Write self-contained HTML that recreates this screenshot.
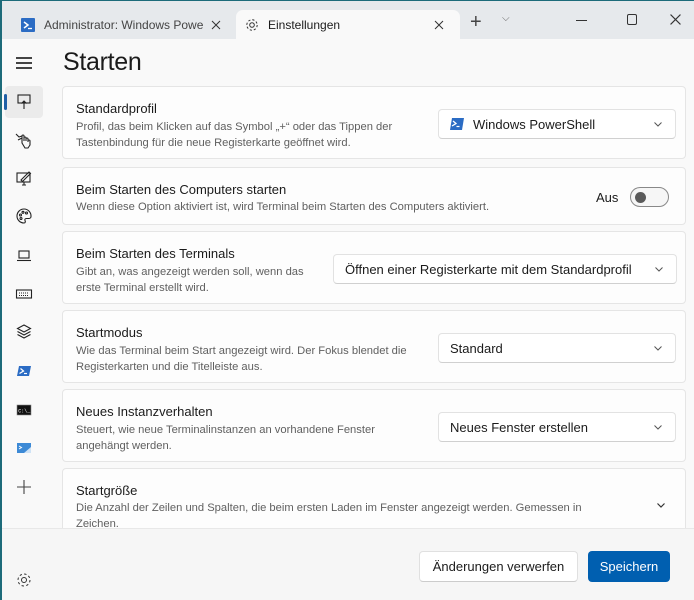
<!DOCTYPE html>
<html><head><meta charset="utf-8"><style>
*{box-sizing:border-box;margin:0;padding:0}
body{width:694px;height:600px;overflow:hidden;font-family:"Liberation Sans",sans-serif;background:#f3f3f3;position:relative;color:#1b1b1b}
.frame{position:absolute;left:0;top:0;width:694px;height:600px;border-left:2px solid #1d6b7a;border-top:1px solid #1d6b7a}
.titlebar{position:absolute;left:2px;top:1px;right:0;height:38px;background:#e6e9ec}
.tab1{position:absolute;left:13px;top:10px;width:220px;height:28px;font-size:12px;color:#444;display:flex;align-items:center}
.tab2{position:absolute;left:234px;top:9px;width:224px;height:30px;background:#f9f9f9;border-radius:7px 7px 0 0;font-size:12px;display:flex;align-items:center}
.content{position:absolute;left:2px;top:39px;right:0;bottom:0;background:#f9f9f9}
.ic{position:absolute;left:14px;width:20px;height:20px}
h1{position:absolute;left:63px;top:48px;font-size:25px;font-weight:normal;letter-spacing:-0.3px;color:#1b1b1b}
.card{position:absolute;left:62px;width:624px;background:#fdfdfd;border:1px solid #e5e5e5;border-radius:4px}
.t{position:absolute;left:13px;font-size:13px;color:#1b1b1b;white-space:nowrap}
.d{position:absolute;left:13px;font-size:11.2px;line-height:16px;color:#606060;white-space:nowrap}
.dd{position:absolute;height:30px;background:#fff;border:1px solid #e2e2e2;border-bottom-color:#d0d0d0;border-radius:4px;font-size:13px;display:flex;align-items:center;padding-left:11px}
.chev{position:absolute;right:12px;top:10px;width:10px;height:8px}
.btn{position:absolute;top:551px;height:31px;border-radius:4px;font-size:13px;display:flex;align-items:center;justify-content:center}
.x{position:absolute;width:10px;height:10px}
</style></head><body>
<div class="titlebar">
 <div class="tab1"><svg width="14" height="14" viewBox="0 0 14 14" style="margin:0 9px 0 6px"><rect width="14" height="14" rx="1" fill="#2b6cc4"/><path d="M3 4l4 3-4 3" stroke="#fff" stroke-width="1.5" fill="none"/><path d="M7 10.5h4" stroke="#fff" stroke-width="1.3"/></svg>Administrator: Windows Powe<svg class="x" style="left:196px;top:9px" viewBox="0 0 10 10"><path d="M1 1l8 8M9 1l-8 8" stroke="#333" stroke-width="1"/></svg></div>
 <div class="tab2"><svg width="16" height="16" viewBox="0 0 16 16" style="margin:0 8px 0 8px"><circle cx="8" cy="8" r="2.3" fill="none" stroke="#333" stroke-width="1"/><circle cx="8" cy="8" r="5.2" fill="none" stroke="#333" stroke-width="1" stroke-dasharray="2.2 1.9"/></svg>Einstellungen<svg class="x" style="left:198px;top:10px" viewBox="0 0 10 10"><path d="M1 1l8 8M9 1l-8 8" stroke="#333" stroke-width="1"/></svg></div>
 <div style="position:absolute;left:468px;top:10px;font-size:20px;color:#444;font-weight:300">+</div>
 <div style="position:absolute;left:500px;top:12px;font-size:10px;color:#666">⌵</div>
 <div style="position:absolute;left:574px;top:19px;width:11px;height:1px;background:#333"></div>
 <div style="position:absolute;left:625px;top:13px;width:10px;height:11px;border:1px solid #333;border-radius:2px"></div>
 <svg class="x" style="left:668px;top:13px;width:11px;height:11px" viewBox="0 0 10 10"><path d="M.5.5l9 9M9.5.5l-9 9" stroke="#333" stroke-width="1"/></svg>
</div>
<div class="content"></div>
<div style="position:absolute;left:2px;right:0;top:528px;bottom:0;background:#f6f6f6;border-top:1px solid #e8e8e8"></div>
<div class="frame"></div>
<!-- sidebar -->
<div style="position:absolute;left:16px;top:57px;width:16px;height:1.5px;background:#444;box-shadow:0 5px 0 #444,0 10px 0 #444"></div>
<div style="position:absolute;left:5px;top:86px;width:38px;height:32px;background:#ebebeb;border-radius:4px"></div>
<div style="position:absolute;left:4px;top:94px;width:3px;height:16px;background:#1f5fa6;border-radius:2px"></div>
<svg class="ic" style="top:92px" viewBox="0 0 20 20" fill="none" stroke="#222" stroke-width="1.1"><rect x="4" y="3" width="12" height="8"/><path d="M10 17V9M7.5 11.5L10 9l2.5 2.5"/></svg>
<svg class="ic" style="top:130px" viewBox="0 0 20 20" fill="none" stroke="#222" stroke-width="1.1"><path d="M2 4l3 3 3-1M4 10l4-2M11 18l-3-5V6a1 1 0 0 1 2 0v5V8a1 1 0 0 1 2 0v3 -2a1 1 0 0 1 2 0v3-1a1 1 0 0 1 2 0v4l-2 3z"/></svg>
<svg class="ic" style="top:168px" viewBox="0 0 20 20" fill="none" stroke="#222" stroke-width="1.1"><rect x="3" y="5" width="13" height="9"/><path d="M8 17h4M10 14v3M7 12l8-8 1.5 1.5-8 8z"/></svg>
<svg class="ic" style="top:206px" viewBox="0 0 20 20" fill="none" stroke="#222" stroke-width="1.1"><path d="M10 3a7 7 0 1 0 0 14c1.5 0 1.5-1.5 1-2.5s0-2 1.5-2H15a2 2 0 0 0 2-2A7 7 0 0 0 10 3z"/><circle cx="6.5" cy="9" r="1"/><circle cx="9" cy="6.3" r="1"/><circle cx="12.5" cy="7" r="1"/><circle cx="7" cy="12.5" r="1"/></svg>
<svg class="ic" style="top:246px" viewBox="0 0 20 20" fill="none" stroke="#222" stroke-width="1.1"><rect x="5" y="5" width="10" height="7"/><path d="M3 14.5h14"/></svg>
<svg class="ic" style="top:284px" viewBox="0 0 20 20" fill="none" stroke="#222" stroke-width="1.1"><rect x="2.5" y="6" width="15" height="8"/><path d="M5 9h10M5 11.5h10" stroke-dasharray="1 1"/></svg>
<svg class="ic" style="top:322px" viewBox="0 0 20 20" fill="none" stroke="#222" stroke-width="1.1"><path d="M10 3l6.5 3.5L10 10 3.5 6.5zM3.5 9.5L10 13l6.5-3.5M3.5 12.5L10 16l6.5-3.5"/></svg>
<svg class="ic" style="top:361px" viewBox="0 0 20 20"><path d="M5 5h12l-2 10H3z" fill="#2b6cc4"/><path d="M6.5 7.5l3 2.5-4 2.5" stroke="#fff" stroke-width="1.3" fill="none"/><path d="M10 12.5h3" stroke="#fff" stroke-width="1.2"/></svg>
<svg class="ic" style="top:400px" viewBox="0 0 20 20"><rect x="3" y="5" width="14" height="10" fill="#111" stroke="#888" stroke-width=".6"/><text x="4.2" y="12.5" font-size="5" fill="#fff" font-family="Liberation Mono">C:\_</text></svg>
<svg class="ic" style="top:438px" viewBox="0 0 20 20"><path d="M3 5h14v10H3z" fill="#3d8ad6"/><path d="M10 15l7-6v6z" fill="#cfe3f6"/><path d="M5 8l2.5 1.5L5 11" stroke="#fff" stroke-width="1" fill="none"/></svg>
<svg class="ic" style="top:477px" viewBox="0 0 20 20" stroke="#444" stroke-width="1.1"><path d="M10 3v14M3 10h14"/></svg>
<svg class="ic" style="top:570px" viewBox="0 0 20 20" fill="none" stroke="#333" stroke-width="1"><circle cx="10" cy="10" r="2.5"/><circle cx="10" cy="10" r="6" stroke-dasharray="2.4 2.3"/></svg>
<h1>Starten</h1>
<!-- cards -->
<div class="card" style="top:86px;height:73px">
 <div class="t" style="top:14px">Standardprofil</div>
 <div class="d" style="top:32px">Profil, das beim Klicken auf das Symbol „+“ oder das Tippen der<br>Tastenbindung für die neue Registerkarte geöffnet wird.</div>
 <div class="dd" style="left:375px;top:22px;width:238px"><svg width="14" height="12" viewBox="0 0 14 12" style="margin-right:9px"><path d="M2 0h12l-2 12H0z" fill="#2b6cc4"/><path d="M3 3l3 2.5-4 2.5" stroke="#fff" stroke-width="1.3" fill="none"/><path d="M6.5 8.5h3" stroke="#fff" stroke-width="1.2"/></svg>Windows PowerShell<svg class="chev" viewBox="0 0 10 8"><path d="M1.5 2.5L5 6l3.5-3.5" stroke="#555" fill="none"/></svg></div>
</div>
<div class="card" style="top:167px;height:58px">
 <div class="t" style="top:14px">Beim Starten des Computers starten</div>
 <div class="d" style="top:31px">Wenn diese Option aktiviert ist, wird Terminal beim Starten des Computers aktiviert.</div>
 <div style="position:absolute;left:533px;top:22px;font-size:13px">Aus</div>
 <div style="position:absolute;left:567px;top:19px;width:39px;height:20px;border:1px solid #888;border-radius:10px;background:#f6f6f6"><div style="position:absolute;left:4px;top:4px;width:11px;height:11px;border-radius:50%;background:#5a5a5a"></div></div>
</div>
<div class="card" style="top:231px;height:73px">
 <div class="t" style="top:14px">Beim Starten des Terminals</div>
 <div class="d" style="top:32px">Gibt an, was angezeigt werden soll, wenn das<br>erste Terminal erstellt wird.</div>
 <div class="dd" style="left:270px;top:22px;width:344px">Öffnen einer Registerkarte mit dem Standardprofil<svg class="chev" viewBox="0 0 10 8"><path d="M1.5 2.5L5 6l3.5-3.5" stroke="#555" fill="none"/></svg></div>
</div>
<div class="card" style="top:310px;height:73px">
 <div class="t" style="top:14px">Startmodus</div>
 <div class="d" style="top:32px">Wie das Terminal beim Start angezeigt wird. Der Fokus blendet die<br>Registerkarten und die Titelleiste aus.</div>
 <div class="dd" style="left:375px;top:22px;width:238px">Standard<svg class="chev" viewBox="0 0 10 8"><path d="M1.5 2.5L5 6l3.5-3.5" stroke="#555" fill="none"/></svg></div>
</div>
<div class="card" style="top:389px;height:73px">
 <div class="t" style="top:14px">Neues Instanzverhalten</div>
 <div class="d" style="top:32px">Steuert, wie neue Terminalinstanzen an vorhandene Fenster<br>angehängt werden.</div>
 <div class="dd" style="left:375px;top:22px;width:238px">Neues Fenster erstellen<svg class="chev" viewBox="0 0 10 8"><path d="M1.5 2.5L5 6l3.5-3.5" stroke="#555" fill="none"/></svg></div>
</div>
<div style="position:absolute;left:62px;top:468px;width:624px;height:60px;overflow:hidden">
<div class="card" style="top:0;left:0;height:70px">
 <div class="t" style="top:14px">Startgröße</div>
 <div class="d" style="top:31px">Die Anzahl der Zeilen und Spalten, die beim ersten Laden im Fenster angezeigt werden. Gemessen in<br>Zeichen.</div>
 <svg style="position:absolute;left:593px;top:32px;width:10px;height:8px" viewBox="0 0 10 8"><path d="M1.5 2.5L5 6l3.5-3.5" stroke="#333" fill="none" stroke-width="1.2"/></svg>
</div></div>
<div class="btn" style="left:419px;width:159px;background:#fff;border:1px solid #e0e0e0;border-bottom-color:#ccc">Änderungen verwerfen</div>
<div class="btn" style="left:588px;width:82px;background:#005fb0;color:#fff">Speichern</div>
</body></html>
